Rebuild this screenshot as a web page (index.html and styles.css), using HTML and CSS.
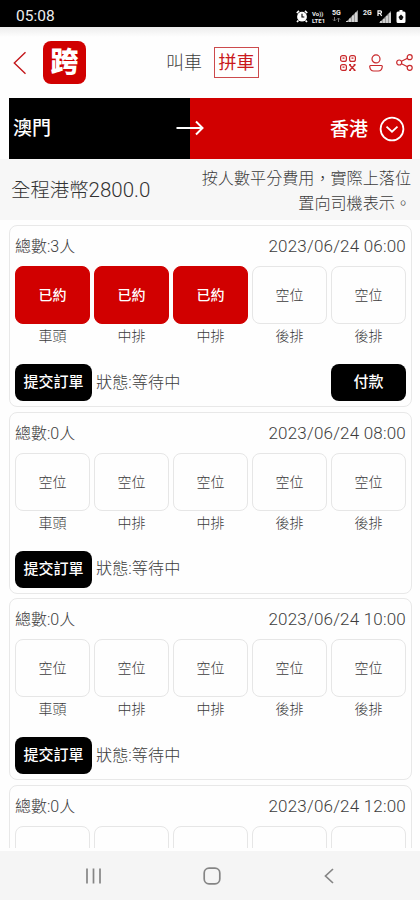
FILE: index.html
```html
<!DOCTYPE html>
<html lang="zh-Hant">
<head>
<meta charset="utf-8">
<title>拼車</title>
<link rel="stylesheet" href="styles.css">
</head>
<body>
<div class="statusbar">
  <span class="clock">05:08</span>
  <div class="signals">
    <svg width="12" height="13" viewBox="0 0 12 13"><circle cx="6" cy="6.7" r="4.9" fill="#fff"/><path d="M.8 3 3 .9M11.2 3 9 .9M2.4 10.5 1 12M9.6 10.5 11 12" stroke="#fff" stroke-width="1.7"/><path d="M6 3.8V7h2.3" stroke="#000" stroke-width="1.1" fill="none"/></svg>
    <div class="net volte"><div>Vo))</div><div>LTE1</div></div>
    <div class="net gen"><div>5G</div><svg width="9" height="5" viewBox="0 0 9 5" fill="none" stroke="#777"><path d="M2.500 0v4M1 2.500 2.500 4 4 2.500M6.500 5V1M5 2.500 6.500 1 8 2.500"/></svg></div>
    <svg class="bars" width="12" height="12" viewBox="0 0 12 12"><path d="M0 12 12 0v12z" fill="#999"/><path d="M1 12V11M4 12V8.500M7 12V5.500M10 12V2.500" stroke="#ddd" stroke-width="1.700"/></svg>
    <div class="net roam">2G</div>
    <svg class="bars2" width="14" height="13" viewBox="0 0 14 13"><path d="M2 13 14 1v12z" fill="#999"/><path d="M4 13v-2M7 13V9M10 13V6M13 13V3" stroke="#ddd" stroke-width="1.600"/><path d="M1 6V.8h2.300q1.200 0 1.200 1.300T3.300 3.400H1M3 3.400 4.700 6" fill="none" stroke="#fff" stroke-width="1.200"/></svg>
    <svg width="10" height="13" viewBox="0 0 10 13"><path d="M3.500 0h3v1.500H8q1.500 0 1.500 1.500v8.500Q9.500 13 8 13H2Q.5 13 .5 11.500V3Q.5 1.500 2 1.500h1.500z" fill="#fff"/><path d="M5 4.500 7.500 7 6 10H4L2.500 7z" fill="#111"/></svg>
  </div>
</div>

<header class="header">
  <svg class="back" width="14" height="24" viewBox="0 0 14 24"><path d="M12.500 1.200 1.300 12l11.200 10.800" fill="none" stroke="#c4181c" stroke-width="1.400"/></svg>
  <div class="logo">跨</div>
  <nav class="tabs"><span class="tab">叫車</span><span class="tab active">拼車</span></nav>
  <div class="actions">
    <svg width="16" height="16" viewBox="0 0 16 16" fill="none" stroke="#c9282b" stroke-width="1.200"><rect x=".6" y=".6" width="5.800" height="5.800" rx="2"/><rect x="9.600" y=".6" width="5.800" height="5.800" rx="2"/><rect x=".6" y="9.600" width="5.800" height="5.800" rx="2"/><path d="M2.500 3.200h2M11.500 3.200h2M2.500 12.200h2"/><path d="m9.500 9.800 5.600 5.600M15.100 9.800l-5.600 5.600M9 9.800h2M13.600 9.800h2M9 15.400h2M13.600 15.400h2" stroke-width="1.400"/></svg>
    <svg width="14" height="18" viewBox="0 0 14 18" fill="none" stroke="#c9282b" stroke-width="1.200"><circle cx="7" cy="4.900" r="4"/><path d="M1.500 11.500h11q.8 0 .8 1-.5 4.500-4 4.500H4.700q-3.500 0-4-4.500 0-1 .8-1z"/></svg>
    <svg width="17" height="17" viewBox="0 0 17 17" fill="none" stroke="#c9282b" stroke-width="1.200"><circle cx="3.200" cy="8.500" r="2.500"/><circle cx="13.700" cy="3.200" r="2.500"/><circle cx="13.700" cy="13.800" r="2.500"/><path d="m5.500 7.300 6-3M5.500 9.700l6 3"/></svg>
  </div>
</header>

<section class="route">
  <div class="from">澳門</div>
  <div class="to"><span>香港</span>
    <svg width="26" height="26" viewBox="0 0 26 26" fill="none" stroke="#fff" stroke-width="1.800"><circle cx="13" cy="13" r="11.400"/><path d="m7.500 10.700 5.500 5 5.500-5"/></svg>
  </div>
  <svg class="arrow" width="28" height="16" viewBox="0 0 28 16" fill="none" stroke="#fff" stroke-width="2"><path d="M.5 8h26M20 1.500 26.500 8 20 14.500"/></svg>
</section>

<section class="fare">
  <div class="price">全程港幣<span>2800.0</span></div>
  <div class="note">按人數平分費用，實際上落位<br>置向司機表示。</div>
</section>

<main class="trips">
  <article class="card">
    <div class="top"><span class="count">總數:3人</span><time>2023/06/24 06:00</time></div>
    <div class="seats">
      <div><b class="seat taken">已約</b><span>車頭</span></div>
      <div><b class="seat taken">已約</b><span>中排</span></div>
      <div><b class="seat taken">已約</b><span>中排</span></div>
      <div><b class="seat">空位</b><span>後排</span></div>
      <div><b class="seat">空位</b><span>後排</span></div>
    </div>
    <div class="bottom"><span class="btn">提交訂單</span><span class="state">狀態:等待中</span><span class="btn pay">付款</span></div>
  </article>
  <article class="card">
    <div class="top"><span class="count">總數:0人</span><time>2023/06/24 08:00</time></div>
    <div class="seats">
      <div><b class="seat">空位</b><span>車頭</span></div>
      <div><b class="seat">空位</b><span>中排</span></div>
      <div><b class="seat">空位</b><span>中排</span></div>
      <div><b class="seat">空位</b><span>後排</span></div>
      <div><b class="seat">空位</b><span>後排</span></div>
    </div>
    <div class="bottom"><span class="btn">提交訂單</span><span class="state">狀態:等待中</span></div>
  </article>
  <article class="card">
    <div class="top"><span class="count">總數:0人</span><time>2023/06/24 10:00</time></div>
    <div class="seats">
      <div><b class="seat">空位</b><span>車頭</span></div>
      <div><b class="seat">空位</b><span>中排</span></div>
      <div><b class="seat">空位</b><span>中排</span></div>
      <div><b class="seat">空位</b><span>後排</span></div>
      <div><b class="seat">空位</b><span>後排</span></div>
    </div>
    <div class="bottom"><span class="btn">提交訂單</span><span class="state">狀態:等待中</span></div>
  </article>
  <article class="card">
    <div class="top"><span class="count">總數:0人</span><time>2023/06/24 12:00</time></div>
    <div class="seats">
      <div><b class="seat"></b></div>
      <div><b class="seat"></b></div>
      <div><b class="seat"></b></div>
      <div><b class="seat"></b></div>
      <div><b class="seat"></b></div>
    </div>
  </article>
</main>

<footer class="navbar">
  <svg width="18" height="18" viewBox="0 0 18 18" stroke="#858585" stroke-width="1.700"><path d="M2 1.500v15M8.500 1.500v15M15 1.500v15"/></svg>
  <svg width="18" height="18" viewBox="0 0 18 18" fill="none" stroke="#858585" stroke-width="1.700"><rect x="1.200" y="1.200" width="15.600" height="15.600" rx="4.800"/></svg>
  <svg width="18" height="18" viewBox="0 0 18 18" fill="none" stroke="#858585" stroke-width="1.700"><path d="M13 2 5.500 9l7.500 7"/></svg>
</footer>
</body>
</html>
```
FILE: styles.css
```css
* { box-sizing: border-box; }
body {
  margin: 0;
  width: 420px;
  height: 900px;
  overflow: hidden;
  display: flex;
  flex-direction: column;
  background: #fefefe;
  color: #3c3c3c;
  font-family: Roboto, "Noto Sans CJK TC", sans-serif;
  font-weight: 300;
}
svg { display: block; flex: none; }

.statusbar {
  flex: none;
  height: 27px;
  padding: 5px 14px 0 16px;
  display: flex;
  justify-content: space-between;
  background: #000;
  color: #eee;
}
.clock { font-size: 15.5px; line-height: 23px; font-weight: 400; }
.signals { display: flex; align-items: flex-start; padding-top: 5px; }
.net { font-weight: 700; font-size: 6px; line-height: 7px; }
.volte { width: 15px; margin-left: 4px; }
.gen { width: 10px; margin-left: 5px; font-size: 7px; }
.bars { margin-left: 4px; }
.roam { width: 10px; margin-left: 5px; font-size: 7px; }
.bars2 { margin: 0 5px 0 4px; }

.header {
  flex: none;
  height: 71px;
  padding: 0 7px 0 13px;
  display: flex;
  align-items: center;
  background: linear-gradient(#ececec, #fefefe 10px);
}
.back { margin-right: 16px; }
.logo {
  width: 43px;
  height: 43px;
  border-radius: 8px;
  background: #d10000;
  color: #fff;
  font-size: 28px;
  line-height: 44px;
  font-weight: 900;
  text-align: center;
}
.tabs {
  display: flex;
  align-items: center;
  gap: 12px;
  margin-left: 80px;
  font-size: 18px;
}
.tab { height: 31px; line-height: 31px; }
.active {
  width: 45px;
  border: 1px solid #cc4a4c;
  color: #c9181b;
  line-height: 29px;
  text-align: center;
  font-weight: 400;
}
.actions { display: flex; align-items: center; gap: 13px; margin-left: auto; }

.route {
  flex: none;
  position: relative;
  height: 61px;
  margin: 0 8px 0 9px;
  display: flex;
  color: #fff;
  font-size: 19px;
  font-weight: 500;
  line-height: 61px;
}
.from { width: 181px; padding: 1px 0 0 4px; line-height: 60px; background: #000; }
.to {
  flex: 1;
  display: flex;
  align-items: center;
  justify-content: flex-end;
  gap: 11px;
  padding-right: 7px;
  background: #d10000;
}
.to span { padding-top: 2px; line-height: 59px; }
.arrow { position: absolute; left: 167px; top: 22px; }

.fare {
  flex: none;
  height: 61px;
  padding: 8px 9px 0 11px;
  display: flex;
  justify-content: space-between;
  background: #f7f7f7;
}
.price { font-size: 19.4px; line-height: 46px; color: #333; }
.price span { font-size: 20.5px; }
.note { font-size: 16.1px; line-height: 24.5px; text-align: right; }

.trips {
  flex: 1;
  min-height: 0;
  overflow: hidden;
  margin-bottom: 3px;
  padding: 5px 8px 0 9px;
  display: flex;
  flex-direction: column;
  gap: 4.500px;
}
.card {
  flex: none;
  height: 182px;
  padding: 9px 5px 0;
  border: 1px solid #e8e8e8;
  border-radius: 8px;
}
.top { display: flex; justify-content: space-between; height: 31px; line-height: 24px; }
.count { font-size: 16px; }
time { font-size: 17px; letter-spacing: .2px; line-height: 23px; }
.seats {
  display: grid;
  grid-template-columns: repeat(5, 1fr);
  gap: 4px;
  font-size: 14px;
  text-align: center;
}
.seats span { display: block; line-height: 24px; }
.seat {
  display: block;
  height: 58px;
  border: 1px solid #e6e6e6;
  border-radius: 8px;
  line-height: 56px;
  font-weight: 300;
}
.taken { background: #d10000; border-color: #d10000; color: #fff; font-weight: 500; }
.bottom { display: flex; align-items: center; margin-top: 16px; }
.btn {
  width: 77px;
  height: 37px;
  border-radius: 8px;
  background: #000;
  color: #fff;
  font-size: 15px;
  font-weight: 500;
  line-height: 37px;
  text-align: center;
}
.state { margin-left: 4px; font-size: 16.2px; line-height: 22px; }
.pay { width: 75px; margin-left: auto; }

.navbar {
  flex: none;
  height: 49px;
  padding: 0 82px 0 85px;
  display: flex;
  align-items: center;
  justify-content: space-between;
  background: #f5f5f5;
}
```
